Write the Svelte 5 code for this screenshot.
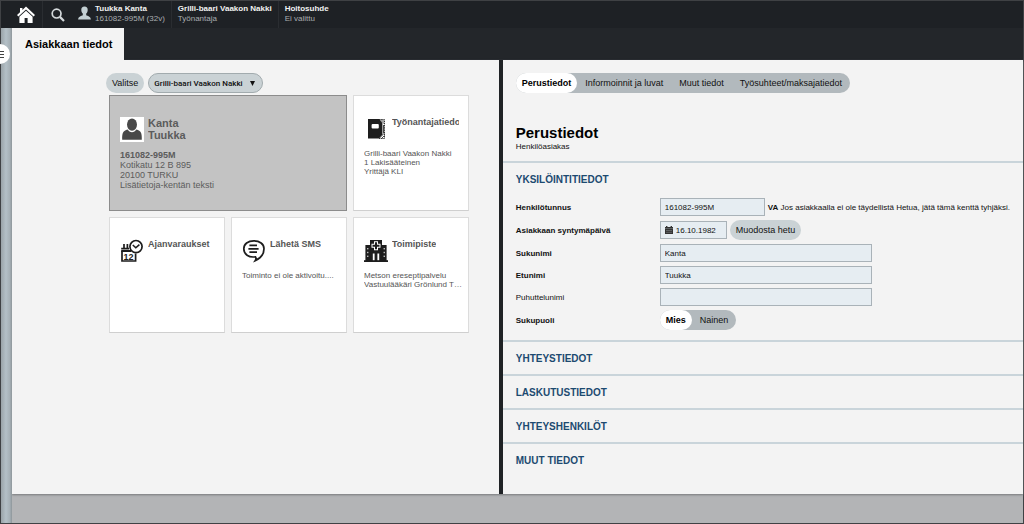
<script lang="ts">
  type Section = { id: string; title: string; open: boolean };

  const tabs = ['Perustiedot', 'Informoinnit ja luvat', 'Muut tiedot', 'Työsuhteet/maksajatiedot'];
  const employers = ['Grilli-baari Vaakon Nakki'];

  let activeTab = 'Perustiedot';
  let employer = employers[0];
  let gender = 'Mies';

  let client = {
    ssn: '161082-995M',
    birthday: '16.10.1982',
    lastName: 'Kanta',
    firstName: 'Tuukka',
    nickname: '',
  };

  let sections: Section[] = [
    { id: 'yksilointi', title: 'YKSILÖINTITIEDOT', open: true },
    { id: 'yhteys', title: 'YHTEYSTIEDOT', open: false },
    { id: 'laskutus', title: 'LASKUTUSTIEDOT', open: false },
    { id: 'henkilot', title: 'YHTEYSHENKILÖT', open: false },
    { id: 'muut', title: 'MUUT TIEDOT', open: false },
  ];

  const tiles = [
    { icon: 'folder', title: 'Työnantajatiedot', lines: ['Grilli-baari Vaakon Nakki', '1 Lakisääteinen', 'Yrittäjä KLI'] },
    { icon: 'calendar', title: 'Ajanvaraukset', lines: [] },
    { icon: 'sms', title: 'Lähetä SMS', lines: ['Toiminto ei ole aktivoitu....'] },
    { icon: 'hospital', title: 'Toimipiste', lines: ['Metson ereseptipalvelu', 'Vastuulääkäri Grönlund T…'] },
  ];

  function toggle(s: Section) {
    s.open = !s.open;
    sections = sections;
  }
</script>

<div class="app">
  <header class="topbar">
    <a class="top-icon home" href="#home" aria-label="Etusivu">
      <svg width="18" height="18" viewBox="0 0 18 18" fill="#fff">
        <path d="M9 0.5 L18 9 L16.6 10.4 L9 3.4 L1.4 10.4 L0 9 L3 6.2 V2 H5.4 V4 Z" />
        <path d="M9 4.8 L15.6 10.8 V17 H10.6 V12 H7.6 V17 H2.4 V10.8 Z" />
      </svg>
    </a>
    <button class="top-icon search" aria-label="Haku">
      <svg width="14" height="14" viewBox="0 0 14 14" fill="none" stroke="#d5dadc">
        <circle cx="5.6" cy="5.6" r="4.4" stroke-width="1.7" />
        <path d="M8.9 8.9 L13 13" stroke-width="2.2" />
      </svg>
    </button>
    <div class="context">
      <svg width="13" height="14" viewBox="0 0 13 14" fill="#c3cfd3">
        <path d="M6.5 0.5 C8.7 0.5 9.8 2 9.7 4 C9.6 5.8 9 6.7 8.2 7.6 V9.2 C9.5 10 12.6 10.2 12.9 13.5 H0.1 C0.4 10.2 3.5 10 4.8 9.2 V7.6 C4 6.7 3.4 5.8 3.3 4 C3.2 2 4.3 0.5 6.5 0.5 Z" />
      </svg>
      <div>
        <strong>Tuukka Kanta</strong>
        <span>161082-995M (32v)</span>
      </div>
    </div>
    <div class="context">
      <div>
        <strong>Grilli-baari Vaakon Nakki</strong>
        <span>Työnantaja</span>
      </div>
    </div>
    <div class="context">
      <div>
        <strong>Hoitosuhde</strong>
        <span>Ei valittu</span>
      </div>
    </div>
  </header>

  <div class="shell">
    <aside class="rail">
      <button class="rail-toggle" aria-label="Avaa valikko">
        <svg width="5" height="7" viewBox="0 0 5 7" stroke="#444" stroke-width="1">
          <path d="M0 0.5 H4 M0 3.5 H4 M0 6.5 H4" />
        </svg>
      </button>
    </aside>

    <main>
      <nav class="page-tabs">
        <a class="page-tab" href="#asiakas">Asiakkaan tiedot</a>
      </nav>

      <div class="panels">
        <section class="overview">
          <div class="toolbar">
            <button class="pill">Valitse</button>
            <label class="picker">
              <select bind:value={employer} aria-label="Työnantaja">
                {#each employers as e}
                  <option>{e}</option>
                {/each}
              </select>
              <svg width="5" height="5" viewBox="0 0 5 5"><path d="M0 0 H5 L2.5 5 Z" fill="#111" /></svg>
            </label>
          </div>

          <div class="tiles">
            <article class="tile client">
              <div class="tile-head">
                <svg width="24" height="25" viewBox="0 0 24 25">
                  <rect width="24" height="25" fill="#fff" />
                  <ellipse cx="12" cy="7.6" rx="5" ry="6.2" fill="#484848" />
                  <path d="M2.2 22.8 C2 16 3 14 7.6 12.6 C9.6 16 14.4 16 16.4 12.6 C21 14 22 16 21.8 22.8 Z" fill="#484848" />
                </svg>
                <h3>Kanta<br />Tuukka</h3>
              </div>
              <p><b>{client.ssn}</b></p>
              <p>Kotikatu 12 B 895</p>
              <p>20100 TURKU</p>
              <p>Lisätietoja-kentän teksti</p>
            </article>

            {#each tiles as t}
              <article class="tile">
                <div class="tile-head">
                  <svg width="24" height="24" viewBox="0 0 24 24">
                    {#if t.icon === 'folder'}
                      <path d="M4 2 H15 L18.4 6 V17.5 L15 21.5 H4 Z" fill="#1d1d1d" />
                      <rect x="7.6" y="7" width="7.2" height="4.6" rx="1" fill="#fff" />
                      <path d="M15 2.5 H20.5 V21.5 H15" fill="none" stroke="#333" stroke-width="1" stroke-dasharray="1.5 0.7" />
                      <path d="M16 2.5 L20.5 7 M18 2.5 L20.5 5 M19.5 8 V16 M20.5 16 L15.5 21 M20.5 18.5 L17.5 21.5" fill="none" stroke="#333" stroke-width="0.9" />
                    {:else if t.icon === 'calendar'}
                      <g fill="none" stroke="#1d1d1d">
                        <path d="M2 12 V22 H15.6 V14.5" stroke-width="1.7" />
                        <path d="M1.2 12 H11 M1.2 9.6 H9" stroke-width="1.8" />
                        <path d="M4 5 V9.6 M7.4 5 V9.6" stroke-width="1.7" />
                        <circle cx="16" cy="7.6" r="6.1" fill="#fff" stroke-width="1.7" />
                        <path d="M12.8 6 L15.8 8.8 L19.4 5.6" stroke-width="1.5" />
                      </g>
                      <text x="3.6" y="20.6" font-size="9" font-weight="700" fill="#1d1d1d">12</text>
                    {:else if t.icon === 'sms'}
                      <g fill="none" stroke="#1d1d1d">
                        <path d="M11.8 1.8 C17.6 1.8 22 5 22 9.8 C22 15 18.6 19.2 13.2 21.6 C14.2 20 14.2 18.8 13.4 17.8 C6.6 18.8 1.8 15.2 1.8 9.8 C1.8 5 6 1.8 11.8 1.8 Z" stroke-width="1.7" />
                        <path d="M7.4 6.4 H15 M6.4 9.8 H16.6 M7.4 13.2 H15" stroke-width="1.8" />
                      </g>
                    {:else}
                      <g fill="#1d1d1d">
                        <path d="M6 1 H18 V22 H15.2 V14.5 H13.4 V22 H10.6 V14.5 H8.8 V22 H6 Z" />
                        <path d="M1.4 6 H6.6 V22 H1.4 Z M17.4 6 H22.6 V22 H17.4 Z" />
                        <rect x="0" y="21.2" width="24" height="1.8" />
                      </g>
                      <path d="M3.8 9 V20 M20.2 9 V20" stroke="#fff" stroke-width="1" stroke-dasharray="1.4 2.4" />
                      <path d="M12 2.2 V11.2 M7.5 6.7 H16.5" stroke="#fff" stroke-width="4" />
                      <path d="M12 3.2 V10.2 M8.5 6.7 H15.5" stroke="#1d1d1d" stroke-width="2" />
                    {/if}
                  </svg>
                  <h3>{t.title}</h3>
                </div>
                {#each t.lines as line}
                  <p>{line}</p>
                {/each}
              </article>
            {/each}
          </div>
        </section>

        <section class="details">
          <div class="details-head">
            <div class="segments">
              {#each tabs as tab}
                <button class:active={activeTab === tab} on:click={() => (activeTab = tab)}>{tab}</button>
              {/each}
            </div>
            <h1>{activeTab}</h1>
            <div class="subtitle">Henkilöasiakas</div>
          </div>

          {#each sections as s}
            <div class="section">
              <h2><button aria-expanded={s.open} on:click={() => toggle(s)}>{s.title}</button></h2>
              {#if s.open && s.id === 'yksilointi'}
                <form class="fields" on:submit|preventDefault>
                  <label class="required" for="ssn">Henkilötunnus</label>
                  <div class="field">
                    <input id="ssn" class="medium" bind:value={client.ssn} />
                    <span class="hint"><b>VA</b> Jos asiakkaalla ei ole täydellistä Hetua, jätä tämä kenttä tyhjäksi.</span>
                  </div>

                  <label class="required" for="birthday">Asiakkaan syntymäpäivä</label>
                  <div class="field">
                    <div class="date">
                      <svg width="8" height="8" viewBox="0 0 8 8">
                        <path d="M0 1 H1 V0 H2.4 V1 H5.6 V0 H7 V1 H8 V8 H0 Z" fill="#333" />
                        <path d="M0 2.5 H8 M1 4.5 H7 M1 6.3 H7" stroke="#8b9296" stroke-width="0.5" />
                      </svg>
                      <input id="birthday" bind:value={client.birthday} />
                    </div>
                    <button type="button" class="pill">Muodosta hetu</button>
                  </div>

                  <label class="required" for="lastName">Sukunimi</label>
                  <input id="lastName" class="wide" bind:value={client.lastName} />

                  <label class="required" for="firstName">Etunimi</label>
                  <input id="firstName" class="wide" bind:value={client.firstName} />

                  <label for="nickname">Puhuttelunimi</label>
                  <input id="nickname" class="wide" bind:value={client.nickname} />

                  <span class="required" id="gender-label">Sukupuoli</span>
                  <div class="segments" role="radiogroup" aria-labelledby="gender-label">
                    {#each ['Mies', 'Nainen'] as g}
                      <label class:active={gender === g}>
                        <input type="radio" name="gender" value={g} bind:group={gender} />{g}
                      </label>
                    {/each}
                  </div>
                </form>
              {/if}
            </div>
          {/each}
        </section>
      </div>
    </main>
  </div>
</div>

<style>
  :global(body) {
    background: #b3b4b6;
  }

  .app {
    display: flex;
    flex-direction: column;
    min-height: 100vh;
    box-sizing: border-box;
    border: 1px solid #3f4144;
    background: #b3b4b6;
    color: #111;
    font-family: "Liberation Sans", Arial, sans-serif;
    font-size: 9px;
  }

  button, input, select {
    font: inherit;
    color: inherit;
  }

  button {
    border: none;
    padding: 0;
    background: none;
    cursor: pointer;
  }

  svg {
    display: block;
    flex: none;
  }

  h1, h2, h3, p {
    margin: 0;
  }

  .topbar {
    display: flex;
    height: 27px;
    background: #1e2125;
    color: #f2f2f2;
  }

  .top-icon {
    display: flex;
    align-items: center;
    justify-content: center;
    width: 29px;
  }

  .home {
    width: 42px;
    padding-left: 8px;
    box-sizing: border-box;
    border-right: 1px solid #2a2d31;
  }

  .context {
    display: flex;
    gap: 4px;
    padding: 3px 6px 0;
    border-right: 1px solid #2a2d31;
    font-size: 8px;
    line-height: 10px;
    white-space: nowrap;
  }

  .context:last-child {
    border-right: none;
  }

  .context svg {
    margin-top: 2px;
  }

  .context strong, .context span {
    display: block;
  }

  .context span {
    color: #a9adb0;
  }

  .shell {
    display: flex;
    flex: 1;
  }

  .rail {
    position: relative;
    flex: 0 0 11px;
    background: linear-gradient(to right, #9aa3a8, #b4c0c7 45%, #a6b0b6 80%, #8e969a);
  }

  .rail-toggle {
    position: absolute;
    top: 16px;
    left: -1px;
    display: flex;
    align-items: center;
    width: 10px;
    height: 20px;
    background: #fff;
    border-radius: 0 10px 10px 0;
  }

  main {
    flex: 1;
    min-width: 0;
  }

  .page-tabs {
    display: flex;
    height: 32px;
    background: #23262a;
  }

  .page-tab {
    padding: 0 12px 0 13px;
    background: #f3f3f3;
    color: #000;
    font-size: 11px;
    font-weight: 700;
    line-height: 32px;
    text-decoration: none;
  }

  .panels {
    display: grid;
    grid-template-columns: minmax(0, 13fr) minmax(0, 14fr);
    background: #f3f3f3;
    box-shadow: 0 1px 2px #77797b;
  }

  .overview {
    padding: 13px 0 0 94px;
  }

  .toolbar {
    display: flex;
    gap: 4px;
    margin-bottom: 2px;
  }

  .pill {
    height: 20px;
    padding: 0 6px;
    border-radius: 10px;
    background: #cad2d5;
  }

  .picker {
    position: relative;
    font-family: Roboto, "Liberation Sans", sans-serif;
    font-size: 8px;
    font-weight: 500;
  }

  .picker select {
    appearance: none;
    display: block;
    height: 20px;
    padding: 0 19px 0 5px;
    border: 1px solid #a2abae;
    border-radius: 10px;
    background: #cad2d5;
  }

  .picker svg {
    position: absolute;
    top: 8px;
    right: 8px;
    pointer-events: none;
  }

  .tiles {
    display: grid;
    grid-template-columns: repeat(3, 116px);
    grid-auto-rows: 116px;
    gap: 6px;
    margin-left: 3px;
  }

  .tile {
    box-sizing: border-box;
    min-width: 0;
    padding: 21px 5px 0 10px;
    border: 1px solid #dcdcdc;
    border-bottom-color: #cfcfcf;
    background: #fff;
    color: #555;
    font-size: 8px;
    line-height: 9px;
  }

  .tile-head {
    display: flex;
    gap: 4px;
    height: 32px;
    padding-right: 4px;
  }

  .tile h3 {
    overflow: hidden;
    font-size: 9px;
    line-height: 11px;
    white-space: nowrap;
  }

  .tile p {
    overflow: hidden;
    text-overflow: ellipsis;
    white-space: nowrap;
  }

  .tile.client {
    grid-column: span 2;
    border-color: #8c8c8c;
    background: #c3c3c3;
    color: #5c5c5c;
    font-size: 9px;
    line-height: 10px;
  }

  .client .tile-head {
    height: 33px;
  }

  .client h3 {
    font-size: 11px;
    line-height: 12px;
  }

  .details {
    padding-bottom: 18px;
    border-left: 4px solid #1f2225;
  }

  .details-head {
    padding: 13px 13px 9px;
  }

  .segments {
    display: flex;
    width: max-content;
    border-radius: 10px;
    background: #b2b9bd;
    line-height: 20px;
  }

  .segments button, .segments label {
    height: 20px;
    padding: 0 8px;
    border-radius: 10px;
    font-size: 9px;
    white-space: nowrap;
  }

  .segments .active {
    padding: 0 6px;
    background: #fff;
    color: #000;
    font-weight: 700;
  }

  .segments input {
    position: absolute;
    opacity: 0;
    width: 0;
    height: 0;
    margin: 0;
  }

  h1 {
    margin-top: 31px;
    color: #000;
    font-size: 15px;
    line-height: 18px;
  }

  .subtitle {
    font-size: 8px;
    line-height: 10px;
  }

  .section {
    border-top: 2px solid #c9d4da;
  }

  h2 {
    padding: 0 13px;
    font-size: 10px;
  }

  h2 button {
    display: block;
    height: 32px;
    color: #1c4a70;
  }

  .fields {
    display: grid;
    grid-template-columns: 140px minmax(0, 1fr);
    align-items: center;
    gap: 4px;
    padding: 3px 0 10px 13px;
    font-size: 8px;
  }

  .fields .required {
    font-weight: 700;
  }

  .field {
    display: flex;
    align-items: center;
    gap: 3px;
  }

  .medium, .wide, .date {
    box-sizing: border-box;
    height: 18px;
    padding: 0 4px;
    border: 1px solid #a9b2b8;
    border-radius: 0;
    background: #e6edf2;
  }

  .medium {
    width: 105px;
  }

  .wide {
    width: 212px;
  }

  .date {
    display: flex;
    align-items: center;
    gap: 3px;
    width: 67px;
  }

  .date input {
    min-width: 0;
    width: 100%;
    padding: 0;
    border: none;
    background: none;
  }

  .field .pill {
    font-size: 9px;
  }

  .hint {
    white-space: nowrap;
  }
</style>
